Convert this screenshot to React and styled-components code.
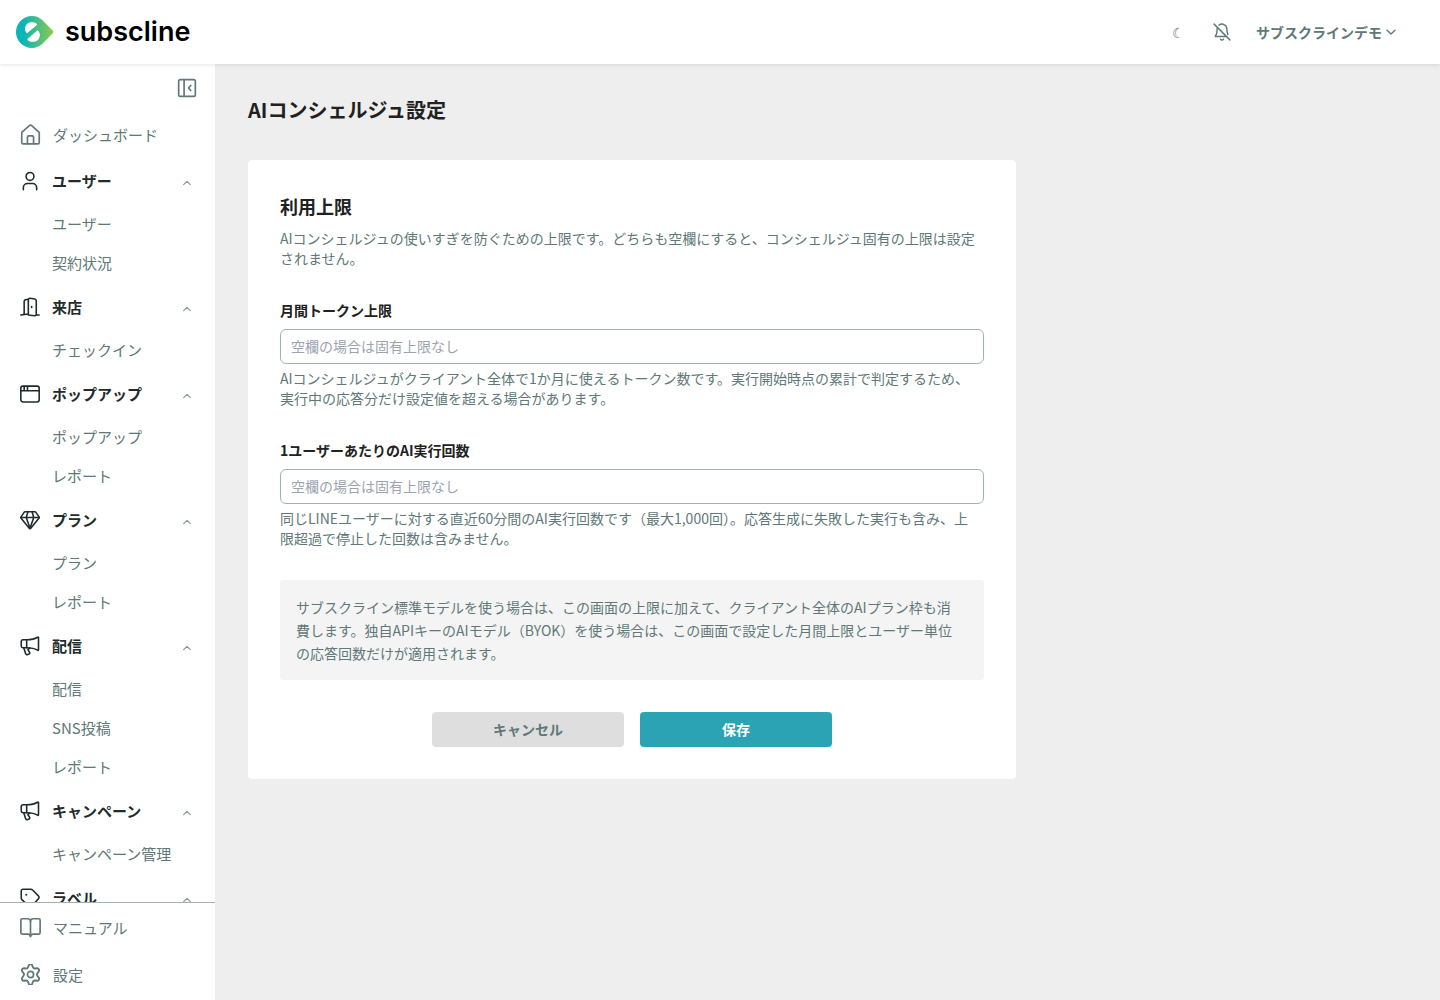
import React from "react";
import styled, { createGlobalStyle } from "styled-components";

const color = {
  text: "#212121",
  strong: "#1f2c2c",
  muted: "#607878",
  line: "#9fb3b3",
  page: "#eeeeee",
  accent: "#2ca3b4",
};

const GlobalStyle = createGlobalStyle`
  *, *::before, *::after { box-sizing: border-box; }
  body {
    margin: 0;
    background: ${color.page};
    color: ${color.text};
    font-family: "Noto Sans CJK JP", sans-serif;
    font-size: 14px;
    line-height: 20px;
  }
  button, input { font: inherit; }
  h1, h2, p, ul { margin: 0; padding: 0; }
  ul { list-style: none; }
`;

const Shell = styled.div`
  display: flex;
  flex-direction: column;
  height: 100vh;
`;

const Header = styled.header`
  display: flex;
  align-items: center;
  justify-content: space-between;
  flex: none;
  height: 64px;
  padding: 0 44px 0 16px;
  background: #fff;
  box-shadow: 0 1px 4px rgba(0, 0, 0, 0.1);
  z-index: 1;
`;

const Brand = styled.a`
  display: flex;
  align-items: center;
  gap: 11px;
  color: #000;
  font-family: Inter, sans-serif;
  font-size: 27px;
  font-weight: 600;
  line-height: 32px;
  text-decoration: none;
`;

const HeaderTools = styled.div`
  display: flex;
  align-items: center;
  gap: 24px;
`;

const PlainButton = styled.button`
  display: inline-flex;
  align-items: center;
  justify-content: center;
  gap: 4px;
  min-width: 20px;
  padding: 0;
  border: 0;
  background: none;
  color: ${color.muted};
  font-weight: ${(p) => (p.$bold ? 700 : 400)};
  cursor: pointer;
`;

const Body = styled.div`
  display: flex;
  flex: 1;
  min-height: 0;
`;

const Sidebar = styled.nav`
  display: flex;
  flex-direction: column;
  flex: none;
  width: 216px;
  border-right: 1px solid ${color.page};
  background: #fff;
  font-size: 15px;
`;

const CollapseRow = styled.div`
  display: flex;
  justify-content: flex-end;
  flex: none;
  padding: 14px 18px 15px;
`;

const NavScroll = styled.div`
  flex: 1;
  min-height: 0;
  overflow: hidden;
`;

const TopLink = styled.a`
  display: flex;
  align-items: center;
  gap: 12px;
  height: ${(p) => p.$height}px;
  padding: 0 20px;
  color: ${color.muted};
  text-decoration: none;
`;

const GroupButton = styled.button`
  display: flex;
  align-items: center;
  gap: 12px;
  width: 100%;
  height: 48px;
  padding: 2px 23px 0 20px;
  border: 0;
  background: none;
  color: ${color.strong};
  font-weight: 700;
  text-align: left;
  cursor: pointer;
`;

const GroupName = styled.span`
  flex: 1;
`;

const Caret = styled.span`
  display: flex;
  padding-top: 4px;
  color: #8b9797;
`;

const SubLink = styled.a`
  display: flex;
  align-items: center;
  height: 39px;
  padding-left: 52px;
  color: ${color.muted};
  text-decoration: none;
`;

const SidebarFooter = styled.div`
  flex: none;
  padding: 1px 0 2px;
  border-top: 1px solid ${color.line};
`;

const Main = styled.main`
  flex: 1;
  min-width: 0;
  padding: 32px;
  overflow: auto;
`;

const PageTitle = styled.h1`
  margin-bottom: 36px;
  font-size: 20px;
  line-height: 28px;
`;

const Card = styled.form`
  display: flex;
  flex-direction: column;
  gap: 32px;
  max-width: 768px;
  padding: 32px;
  border-radius: 4px;
  background: #fff;
`;

const Intro = styled.section`
  display: grid;
  gap: 8px;
`;

const SectionTitle = styled.h2`
  font-size: 18px;
  line-height: 28px;
`;

const Hint = styled.p`
  color: ${color.muted};
`;

const FieldHint = styled(Hint)`
  padding-right: 8px;
`;

const Field = styled.div`
  display: flex;
  flex-direction: column;
`;

const FieldLabel = styled.label`
  margin-bottom: 9px;
  font-weight: 700;
`;

const TextInput = styled.input`
  width: 100%;
  height: 35px;
  margin-bottom: 4px;
  padding: 0 10px 2px;
  border: 1px solid ${color.line};
  border-radius: 6px;
  background: #fff;
  color: ${color.text};
  &::placeholder { color: #9ca3af; opacity: 1; }
`;

const Notice = styled.p`
  padding: 16px 24px 15px 16px;
  border-radius: 4px;
  background: #f4f4f4;
  color: ${color.muted};
  line-height: 23px;
`;

const Actions = styled.div`
  display: flex;
  justify-content: center;
  gap: 16px;
`;

const ActionButton = styled.button`
  width: 192px;
  height: 35px;
  padding: 0 0 2px;
  border: 0;
  border-radius: 4px;
  background: ${(p) => (p.$primary ? color.accent : "#dedede")};
  color: ${(p) => (p.$primary ? "#fff" : color.muted)};
  font-weight: 700;
  cursor: pointer;
`;

const StrokeIcon = styled.svg`
  flex: none;
  fill: none;
  stroke: currentColor;
  stroke-linecap: round;
  stroke-linejoin: round;
`;

const Icon = ({ size = 20, width = 1.9, children }) => (
  <StrokeIcon width={size} height={size} viewBox="0 0 24 24" strokeWidth={width} aria-hidden="true">
    {children}
  </StrokeIcon>
);

const shapes = {
  home: (
    <>
      <path d="M2 9.5 11 1.6a1.5 1.5 0 0 1 2 0L22 9.5V21a1.7 1.7 0 0 1-1.7 1.7H3.7A1.7 1.7 0 0 1 2 21Z" />
      <path d="M8.5 22.5V15a1.5 1.5 0 0 1 1.5-1.5h4a1.5 1.5 0 0 1 1.5 1.5v7.5" />
    </>
  ),
  user: (
    <>
      <circle cx="12" cy="6.5" r="4.7" />
      <path d="M4 22.5V20a5 5 0 0 1 5-5h6a5 5 0 0 1 5 5v2.5" />
    </>
  ),
  door: (
    <>
      <path d="M1 21.5 10 20.5M19.5 21.5H23M10 3H7.500A2.500 2.500 0 0 0 5 5.500V21" />
      <path d="M10 2.500v19l7.500 1c1 .1 2-.6 2-1.600V4.700c0-1.200-.8-2.100-2-2.300L12 1.500a1.800 1.800 0 0 0-2 1.800" />
      <path d="M14 11.500v1" />
    </>
  ),
  window: (
    <>
      <rect x="1" y="2.500" width="22" height="19" rx="2.500" />
      <path d="M1 8h22M5 3v4.500M9 3v4.500" />
    </>
  ),
  diamond: (
    <>
      <path d="M6.500 2h11a2 2 0 0 1 1.600.8L23 8.500a1 1 0 0 1-.1 1.200L12.900 22a1.200 1.200 0 0 1-1.800 0L1.100 9.700A1 1 0 0 1 1 8.500l3.900-5.700A2 2 0 0 1 6.500 2Z" />
      <path d="M1 9h22M9.500 2 7.500 9 12 22l4.500-13-2-7" />
    </>
  ),
  horn: (
    <>
      <path d="M8 4.500H3.500A2 2 0 0 0 1.500 6.500V12a2 2 0 0 0 2 2H8Z" />
      <path d="M8 4.500c4.500 0 9.500-.8 13-3a.7.7 0 0 1 1.200.6v14.300a.7.7 0 0 1-1.200.6C17.500 14.800 12.500 14 8 14" />
      <path d="m4.500 14 2.200 7a2 2 0 0 0 2.600 1.300l1.500-.6a1.500 1.500 0 0 0 .8-2L9.500 16.500l2-2" />
    </>
  ),
  tag: (
    <>
      <path d="M3.500 1.500H13a3 3 0 0 1 2.100.9l7 7a2.500 2.500 0 0 1 0 3.600L14 22a2.500 2.500 0 0 1-3.600 0l-8-8a3 3 0 0 1-.9-2.100V3.500a2 2 0 0 1 2-2Z" />
      <path d="M7.500 8v.01" strokeWidth="2.400" />
    </>
  ),
  book: (
    <>
      <path d="M12 5a3 3 0 0 0-3-3H2.500A1.500 1.500 0 0 0 1 3.500V18a1.500 1.500 0 0 0 1.500 1.500H9a3 3 0 0 1 3 3 3 3 0 0 1 3-3h6.500A1.500 1.500 0 0 0 23 18V3.500A1.500 1.500 0 0 0 21.500 2H15a3 3 0 0 0-3 3Z" />
      <path d="M12 5v17" />
    </>
  ),
  gear: (
    <>
      <path d="m9.500 3.600.7-1.700a2 2 0 0 1 3.600 0l.7 1.700a2.300 2.300 0 0 0 2.400 1.400l1.900-.3a2 2 0 0 1 1.800 3.100l-1.200 1.500a2.300 2.300 0 0 0 0 2.900l1.200 1.500a2 2 0 0 1-1.800 3.100l-1.900-.3a2.300 2.300 0 0 0-2.400 1.400l-.7 1.700a2 2 0 0 1-3.600 0l-.7-1.700a2.300 2.300 0 0 0-2.400-1.400l-1.900.3a2 2 0 0 1-1.800-3.100l1.200-1.500a2.300 2.300 0 0 0 0-2.900L3.400 7.800a2 2 0 0 1 1.800-3.100l1.900.3a2.300 2.300 0 0 0 2.400-1.400Z" transform="translate(-1.200 -.8) scale(1.100 1.190)" />
      <circle cx="12" cy="12" r="3.500" />
    </>
  ),
  collapse: (
    <>
      <rect x="2" y="2" width="20" height="20" rx="2" />
      <path d="M8.500 2v20M16.500 9 14 12l2.500 3" />
    </>
  ),
  bellOff: (
    <path d="M8 2.800A6.500 6.500 0 0 1 18.500 8c0 3.500.5 5.800 1.300 7.500M5.500 6.500V9c0 4.200-1 7-2.500 9h14M10 21.500a2.300 2.300 0 0 0 4 0M1.500 1.500l21 21" />
  ),
  up: <path d="m4 16 8-8 8 8" />,
  down: <path d="m2.500 8 9.500 9 9.500-9" />,
};

const LogoMark = () => (
  <svg width="38" height="32" viewBox="0 0 38 32" aria-hidden="true">
    <defs>
      <linearGradient id="brand" x1="0" x2="1">
        <stop offset="0.200" stopColor="#0db4b8" />
        <stop offset="1" stopColor="#8ccb48" />
      </linearGradient>
    </defs>
    <path
      d="M16 0a16 16 0 1 0 0 32c4 0 7.500-1.500 10.500-4.200L36.700 17.300a2 2 0 0 0 0-2.700L26.500 4.200A15.500 15.500 0 0 0 16 0Z"
      fill="url(#brand)"
    />
    <path d="M11 17.300a6.400 6.400 0 0 1 4.600-11c2.800-.3 5 .8 5.700 2.500Z" fill="#fff" />
    <path d="M21.500 14.200a6.500 6.500 0 0 1-4.200 11.500c-2.800.4-5.300-.7-6.100-2.500Z" fill="#fff" />
  </svg>
);

const groups = [
  { name: "ユーザー", icon: "user", items: ["ユーザー", "契約状況"] },
  { name: "来店", icon: "door", items: ["チェックイン"] },
  { name: "ポップアップ", icon: "window", items: ["ポップアップ", "レポート"] },
  { name: "プラン", icon: "diamond", items: ["プラン", "レポート"] },
  { name: "配信", icon: "horn", items: ["配信", "SNS投稿", "レポート"] },
  { name: "キャンペーン", icon: "horn", items: ["キャンペーン管理"] },
  { name: "ラベル", icon: "tag", items: [] },
];

const fields = [
  {
    id: "monthly-tokens",
    label: "月間トークン上限",
    hint: "AIコンシェルジュがクライアント全体で1か月に使えるトークン数です。実行開始時点の累計で判定するため、実行中の応答分だけ設定値を超える場合があります。",
  },
  {
    id: "runs-per-user",
    label: "1ユーザーあたりのAI実行回数",
    hint: "同じLINEユーザーに対する直近60分間のAI実行回数です（最大1,000回）。応答生成に失敗した実行も含み、上限超過で停止した回数は含みません。",
  },
];

const NavGroup = ({ name, icon, items }) => (
  <li>
    <GroupButton type="button" aria-expanded="true">
      <Icon>{shapes[icon]}</Icon>
      <GroupName>{name}</GroupName>
      <Caret>
        <Icon size={10} width={2.8}>{shapes.up}</Icon>
      </Caret>
    </GroupButton>
    <ul>
      {items.map((item) => (
        <li key={item}>
          <SubLink href="#">{item}</SubLink>
        </li>
      ))}
    </ul>
  </li>
);

export default function App() {
  return (
    <>
      <GlobalStyle />
      <Shell>
        <Header>
          <Brand href="#">
            <LogoMark />
            subscline
          </Brand>
          <HeaderTools>
            <PlainButton type="button">☾</PlainButton>
            <PlainButton type="button" aria-label="通知">
              <Icon size={18}>{shapes.bellOff}</Icon>
            </PlainButton>
            <PlainButton type="button" $bold>
              サブスクラインデモ
              <Icon size={10} width={3.4}>{shapes.down}</Icon>
            </PlainButton>
          </HeaderTools>
        </Header>
        <Body>
          <Sidebar>
            <CollapseRow>
              <PlainButton type="button" aria-label="メニューを閉じる">
                <Icon width={2}>{shapes.collapse}</Icon>
              </PlainButton>
            </CollapseRow>
            <NavScroll>
              <TopLink href="#" $height={43}>
                <Icon size={21}>{shapes.home}</Icon>
                ダッシュボード
              </TopLink>
              <ul>
                {groups.map((group) => (
                  <NavGroup key={group.name} {...group} />
                ))}
              </ul>
            </NavScroll>
            <SidebarFooter>
              <TopLink href="#" $height={47}>
                <Icon size={21}>{shapes.book}</Icon>
                マニュアル
              </TopLink>
              <TopLink href="#" $height={47}>
                <Icon size={21}>{shapes.gear}</Icon>
                設定
              </TopLink>
            </SidebarFooter>
          </Sidebar>
          <Main>
            <PageTitle>AIコンシェルジュ設定</PageTitle>
            <Card>
              <Intro>
                <SectionTitle>利用上限</SectionTitle>
                <Hint>
                  AIコンシェルジュの使いすぎを防ぐための上限です。どちらも空欄にすると、コンシェルジュ固有の上限は設定されません。
                </Hint>
              </Intro>
              {fields.map(({ id, label, hint }) => (
                <Field key={id}>
                  <FieldLabel htmlFor={id}>{label}</FieldLabel>
                  <TextInput id={id} inputMode="numeric" placeholder="空欄の場合は固有上限なし" />
                  <FieldHint>{hint}</FieldHint>
                </Field>
              ))}
              <Notice>
                サブスクライン標準モデルを使う場合は、この画面の上限に加えて、クライアント全体のAIプラン枠も消費します。独自APIキーのAIモデル（BYOK）を使う場合は、この画面で設定した月間上限とユーザー単位の応答回数だけが適用されます。
              </Notice>
              <Actions>
                <ActionButton type="button">キャンセル</ActionButton>
                <ActionButton type="button" $primary>保存</ActionButton>
              </Actions>
            </Card>
          </Main>
        </Body>
      </Shell>
    </>
  );
}
